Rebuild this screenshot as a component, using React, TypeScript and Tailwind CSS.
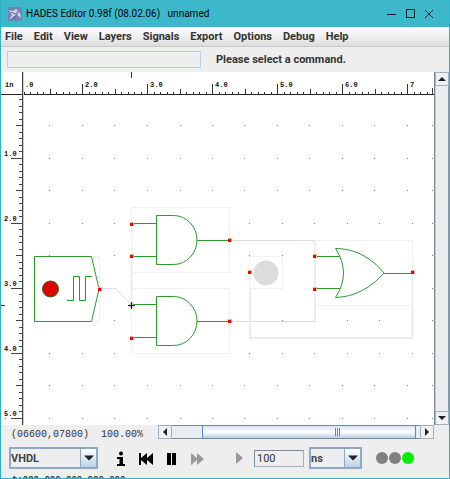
import type { ReactNode } from "react";

const MENUS = ["File", "Edit", "View", "Layers", "Signals", "Export", "Options", "Debug", "Help"];

const GREEN = "#2a9a2a";
const OUTLINE = "#f0f0f0";
const WIRE = "#dcdcdc";

// major ruler marks, one inch is 65 units
const H_LABELS = [
	{ x: 82, text: "2.0" },
	{ x: 147, text: "3.0" },
	{ x: 212, text: "4.0" },
	{ x: 277, text: "5.0" },
	{ x: 342, text: "6.0" },
	{ x: 407, text: "7" },
];
const V_LABELS = [
	{ y: 158, text: "1.0" },
	{ y: 223, text: "2.0" },
	{ y: 288, text: "3.0" },
	{ y: 353, text: "4.0" },
	{ y: 418, text: "5.0" },
];

const FULL_ROW = [49, 82, 114, 147, 180, 212, 244, 277, 309, 342, 374, 407, 432];
const SHIFTED_ROW = [49, 82, 114, 249, 282, 314, 347, 379, 412, 432];
const GRID = [
	{ y: 125, xs: FULL_ROW },
	{ y: 158, xs: FULL_ROW },
	{ y: 190, xs: FULL_ROW },
	{ y: 223, xs: SHIFTED_ROW },
	{ y: 255, xs: [49, 114, 249, 282, 432] },
	{ y: 288, xs: [249, 432] },
	{ y: 320, xs: [114, 249, 282, 314, 347, 379, 432] },
	{ y: 353, xs: SHIFTED_ROW },
	{ y: 385, xs: FULL_ROW },
	{ y: 418, xs: [5, ...FULL_ROW] },
];

const PINS = [
	[99, 289],
	[131, 224],
	[131, 256],
	[131, 338],
	[229, 240],
	[229, 321],
	[249, 272],
	[314, 256],
	[314, 289],
	[412, 272],
];

function tickLength(i: number) {
	if (i % 10 === 0) return 11;
	if (i % 5 === 0) return 6;
	return 3;
}

function Rulers() {
	return (
		<g>
			<path d="M1 94.5H434" stroke="#222" />
			<path d="M22.5 72V425" stroke="#444" />
			<path d="M23.5 72V425" stroke="#ccc" />
			{Array.from({ length: 63 }, (_, k) => {
				const x = Math.floor(24 + k * 6.5);
				return <rect key={k} x={x} y={95 - tickLength(k + 1)} width="1" height={tickLength(k + 1)} fill="#333" />;
			})}
			<rect x="432" y="88" width="1" height="6" fill="#444" />
			{Array.from({ length: 50 }, (_, k) => {
				const y = Math.floor(99.5 + k * 6.5);
				return <rect key={k} x={22 - tickLength(k + 1)} y={y} width={tickLength(k + 1)} height="1" fill="#444" />;
			})}
			<path d="M131.5 72V78M1 305.5H5" stroke="#333" />
			<g fontFamily="'Liberation Mono', monospace" fontSize="7" fontWeight="bold" fill="#111">
				<text x="5" y="87">in</text>
				<text x="25" y="87">.0</text>
				{H_LABELS.map((l) => (
					<text key={l.x} x={l.x + 3} y="87">{l.text}</text>
				))}
				{V_LABELS.map((l) => (
					<text key={l.y} x="4" y={l.y - 2}>{l.text}</text>
				))}
			</g>
		</g>
	);
}

function AndGate({ y }: { y: number }) {
	return (
		<g fill="none" stroke={GREEN}>
			<rect x="131.5" y={y + 0.5} width="98" height="65" stroke={OUTLINE} />
			<path d={`M156.5 ${y + 8.5}H173.5A23.5 24.5 0 0 1 173.5 ${y + 57.5}H156.5Z`} />
			<path d={`M131 ${y + 16.5}H156M131 ${y + 49.5}H156M197 ${y + 33.5}H229`} />
		</g>
	);
}

function Schematic() {
	return (
		<svg className="block h-full w-full" role="img" aria-label="Schematic">
			<g transform="translate(-1 -72)">
				<Rulers />
				{GRID.map((row) =>
					row.xs.map((x) => <rect key={`${x}-${row.y}`} x={x} y={row.y} width="1" height="1" fill="#777" />),
				)}

				{/* wires */}
				<g fill="none" stroke={WIRE}>
					<path d="M99 288.5H115.5L131.5 305" />
					<path d="M229 240.5H315.5V321.5H229" />
					<path d="M131.5 256V305M250 288V338H412.5V272M315 240V321" stroke="#ececec" strokeWidth="2" />
				</g>

				{/* clock source */}
				<g fill="none" stroke={GREEN}>
					<rect x="34.5" y="256.5" width="65" height="65" stroke={OUTLINE} />
					<path d="M34.5 256.5H91.5L99 289L91.5 321.5H34.5Z" />
					<path d="M67 300.5H73.5V276.5H79.5V300.5H85.5V276.5H92" />
					<circle cx="50.5" cy="289" r="8" fill="#e00000" stroke="#2c6b12" />
				</g>

				<AndGate y={207} />
				<AndGate y={288} />

				{/* lamp */}
				<rect x="249.5" y="256.5" width="33" height="32" fill="none" stroke={OUTLINE} />
				<circle cx="266" cy="273" r="12.5" fill="#dcdcdc" />

				{/* or gate */}
				<g fill="none" stroke={GREEN}>
					<rect x="315.5" y="240.5" width="97" height="65" stroke={OUTLINE} />
					<path d="M335.5 248.5C353 248.5 370 256 384 273C370 289 353 297 335.5 297.5Q351.5 273 335.5 248.5Z" />
					<path d="M315 256.5H340M315 288.5H340M384 273.5H412" />
				</g>

				{PINS.map(([x, y]) => (
					<g key={`${x}-${y}`}>
						<rect x={x - 1} y={y - 2} width="4" height="4" fill="#eeb48c" />
						<rect x={x - 1} y={y - 1} width="3" height="3" fill="#f00000" />
					</g>
				))}
				<circle cx="131.5" cy="305.5" r="2.5" fill="#bbb" />
				<path d="M128 305.5H135M131.5 302V309" stroke="#222" />
			</g>
		</svg>
	);
}

function Arrow({ dir, className = "size-2" }: { dir: "up" | "down" | "left" | "right"; className?: string }) {
	const paths = {
		up: "M0 6L4 2L8 6Z",
		down: "M0 2L4 6L8 2Z",
		left: "M6 0L2 4L6 8Z",
		right: "M2 0L6 4L2 8Z",
	};
	return (
		<svg className={className} viewBox="0 0 8 8" fill="#222" aria-hidden="true">
			<path d={paths[dir]} />
		</svg>
	);
}

function ScrollButton({ dir, label }: { dir: "up" | "down" | "left" | "right"; label: string }) {
	return (
		<button
			aria-label={label}
			className="flex size-3.5 shrink-0 items-center justify-center border border-[#9fb0c0] bg-[#f0f0f0]"
		>
			<Arrow dir={dir} />
		</button>
	);
}

function Combo({ id, label, value, className }: { id: string; label: string; value: string; className: string }) {
	return (
		<div className={`relative h-[22px] border-2 border-[#8ea9c1] bg-[#eeeeee] ${className}`}>
			<label htmlFor={id} className="sr-only">{label}</label>
			<select id={id} className="block h-full w-full appearance-none bg-transparent pt-0.5 text-[11px] leading-4 font-bold text-[#444] outline-none">
				<option>{value}</option>
			</select>
			<span className="pointer-events-none absolute inset-y-0 right-0 flex w-4 items-center justify-center border-l border-[#8ea9c1] bg-linear-to-b from-white to-[#bcd2e6]">
				<Arrow dir="down" className="size-2.5" />
			</span>
		</div>
	);
}

function IconButton({ label, children }: { label: string; children: ReactNode }) {
	return (
		<button aria-label={label} className="flex size-4 items-center justify-center">
			{children}
		</button>
	);
}

function WindowButtons() {
	return (
		<div className="flex gap-[3px]">
			<IconButton label="Minimize">
				<svg className="size-3" viewBox="0 0 12 12" stroke="#123" fill="none" aria-hidden="true">
					<path d="M2 6.500H11" />
				</svg>
			</IconButton>
			<IconButton label="Maximize">
				<svg className="size-3" viewBox="0 0 12 12" stroke="#123" fill="none" aria-hidden="true">
					<rect x="2.500" y="1.500" width="8" height="8" />
				</svg>
			</IconButton>
			<IconButton label="Close">
				<svg className="size-3" viewBox="0 0 12 12" stroke="#123" fill="none" aria-hidden="true">
					<path d="M2 2L10 10M10 2L2 10" />
				</svg>
			</IconButton>
		</div>
	);
}

export default function App() {
	return (
		<div className="flex h-screen flex-col overflow-hidden border border-t-0 border-[#2fb0c5] bg-[#eeeeee] font-[Roboto,sans-serif] text-[11px] text-[#333]">
			<header className="flex h-[27px] shrink-0 items-center bg-[#3db8cb] pr-3 pl-[7px] text-black">
				<svg className="size-3.5" viewBox="0 0 14 14" aria-hidden="true">
					<rect width="14" height="14" fill="#7381b5" />
					<path d="M1 3L5 4L8 2L12 6L13 11L9 8L6 9L1 13L4 8Z" fill="#cdd5e5" />
					<path d="M3 5L7 7L11 4M6 11L10 6" stroke="#4d5c98" fill="none" />
				</svg>
				<h1 className="flex-1 pl-1 text-[10px] leading-4 whitespace-pre">
					HADES Editor 0.98f (08.02.06)   unnamed
				</h1>
				<WindowButtons />
			</header>

			<nav className="flex h-5 shrink-0 items-center gap-[11px] border-b border-[#c8c8c8] bg-linear-to-b from-white to-[#dddddd] px-1">
				{MENUS.map((m) => (
					<button key={m} className="leading-4 font-bold">{m}</button>
				))}
			</nav>

			<div className="flex h-[25px] shrink-0 items-center gap-[15px] px-1.5">
				<input aria-label="Command" className="h-[17px] w-[194px] border border-[#b8cfe5] bg-[#eeeeee] px-1 outline-none" />
				<p className="leading-4 font-bold">Please select a command.</p>
			</div>

			<main className="flex min-h-0 flex-1">
				<div className="min-w-0 flex-1 overflow-hidden bg-white">
					<Schematic />
				</div>
				<div className="flex w-[15px] shrink-0 flex-col border-l border-[#7a8a99]">
					<ScrollButton dir="up" label="Scroll up" />
					<div className="flex-1 border-x border-l-[#b8cfe5] border-r-[#8a9aaa] bg-[#ededed]" />
					<ScrollButton dir="down" label="Scroll down" />
				</div>
			</main>

			<div className="flex h-[15px] shrink-0 items-start pr-[15px] pl-2.5">
				<p className="flex w-[147px] shrink-0 gap-3 pt-0.5 font-['Liberation_Mono',monospace] text-[10px] leading-4">
					<span>(06600,07800)</span>
					<span>100.00%</span>
				</p>
				<div className="flex min-w-0 flex-1 bg-[#e8edf2]">
					<ScrollButton dir="left" label="Scroll left" />
					<div className="flex min-w-0 flex-1 border-y border-[#7a8a99] pr-1 pl-[30px]">
						<div className="flex flex-1 items-center justify-center gap-px border-x border-[#6382bf] bg-linear-to-b from-[#d5e3f2] via-white to-[#b8cfe5] pl-14">
							<span className="h-2 w-px bg-[#6382bf]" />
							<span className="h-2 w-px bg-[#6382bf]" />
							<span className="h-2 w-px bg-[#6382bf]" />
						</div>
					</div>
					<ScrollButton dir="right" label="Scroll right" />
				</div>
			</div>

			<footer className="shrink-0 pl-2">
				<div className="flex h-9 items-center">
					<Combo id="mode" label="Simulation mode" value="VHDL" className="w-[89px]" />
					<div className="flex gap-[9px] pl-4">
						<IconButton label="Info">
							<svg className="size-4" viewBox="0 0 16 16" aria-hidden="true">
								<circle cx="7" cy="3.5" r="2" />
								<path d="M3 7H9V14H11V16H3V14H5.500V9H3Z" />
							</svg>
						</IconButton>
						<IconButton label="Rewind">
							<svg className="size-4" viewBox="0 0 16 16" aria-hidden="true">
								<path d="M0 3H2V8L8 3V8L14 3V15L8 10V15L2 10V15H0Z" />
							</svg>
						</IconButton>
						<IconButton label="Pause">
							<svg className="size-4" viewBox="0 0 16 16" aria-hidden="true">
								<path d="M3 3H7V15H3ZM8 3H12V15H8Z" />
							</svg>
						</IconButton>
						<IconButton label="Fast forward">
							<svg className="size-4" viewBox="0 0 16 16" fill="#999" aria-hidden="true">
								<path d="M2 3L8 8V3L15 9L8 15V10L2 15Z" />
							</svg>
						</IconButton>
					</div>
					<div className="flex items-center gap-[7px] pl-[26px]">
						<IconButton label="Run for">
							<svg className="size-4" viewBox="0 0 16 16" fill="#999" aria-hidden="true">
								<path d="M5 2L12 8L5 14Z" />
							</svg>
						</IconButton>
						<input
							aria-label="Duration"
							defaultValue="100"
							className="h-[17px] w-[50px] border border-t-[#7a8a99] border-r-[#a0b4c8] border-b-[#a0b4c8] border-l-[#7a8a99] bg-[#eeeeee] px-0.5 leading-3 outline-none"
						/>
					</div>
					<div className="pl-[5px]">
						<Combo id="unit" label="Time unit" value="ns" className="w-[53px]" />
					</div>
					<div className="flex gap-px pl-3.5">
						<span className="size-3 rounded-full bg-[#808080]" />
						<span className="size-3 rounded-full bg-[#808080]" />
						<span className="size-3 rounded-full bg-[#00f000]" />
					</div>
				</div>
				<p className="h-0.5 overflow-hidden pl-[3px] font-['Liberation_Mono',monospace] text-[9px] leading-[8px] font-bold whitespace-pre">
					t:000.000.000.000.000
				</p>
			</footer>
		</div>
	);
}
